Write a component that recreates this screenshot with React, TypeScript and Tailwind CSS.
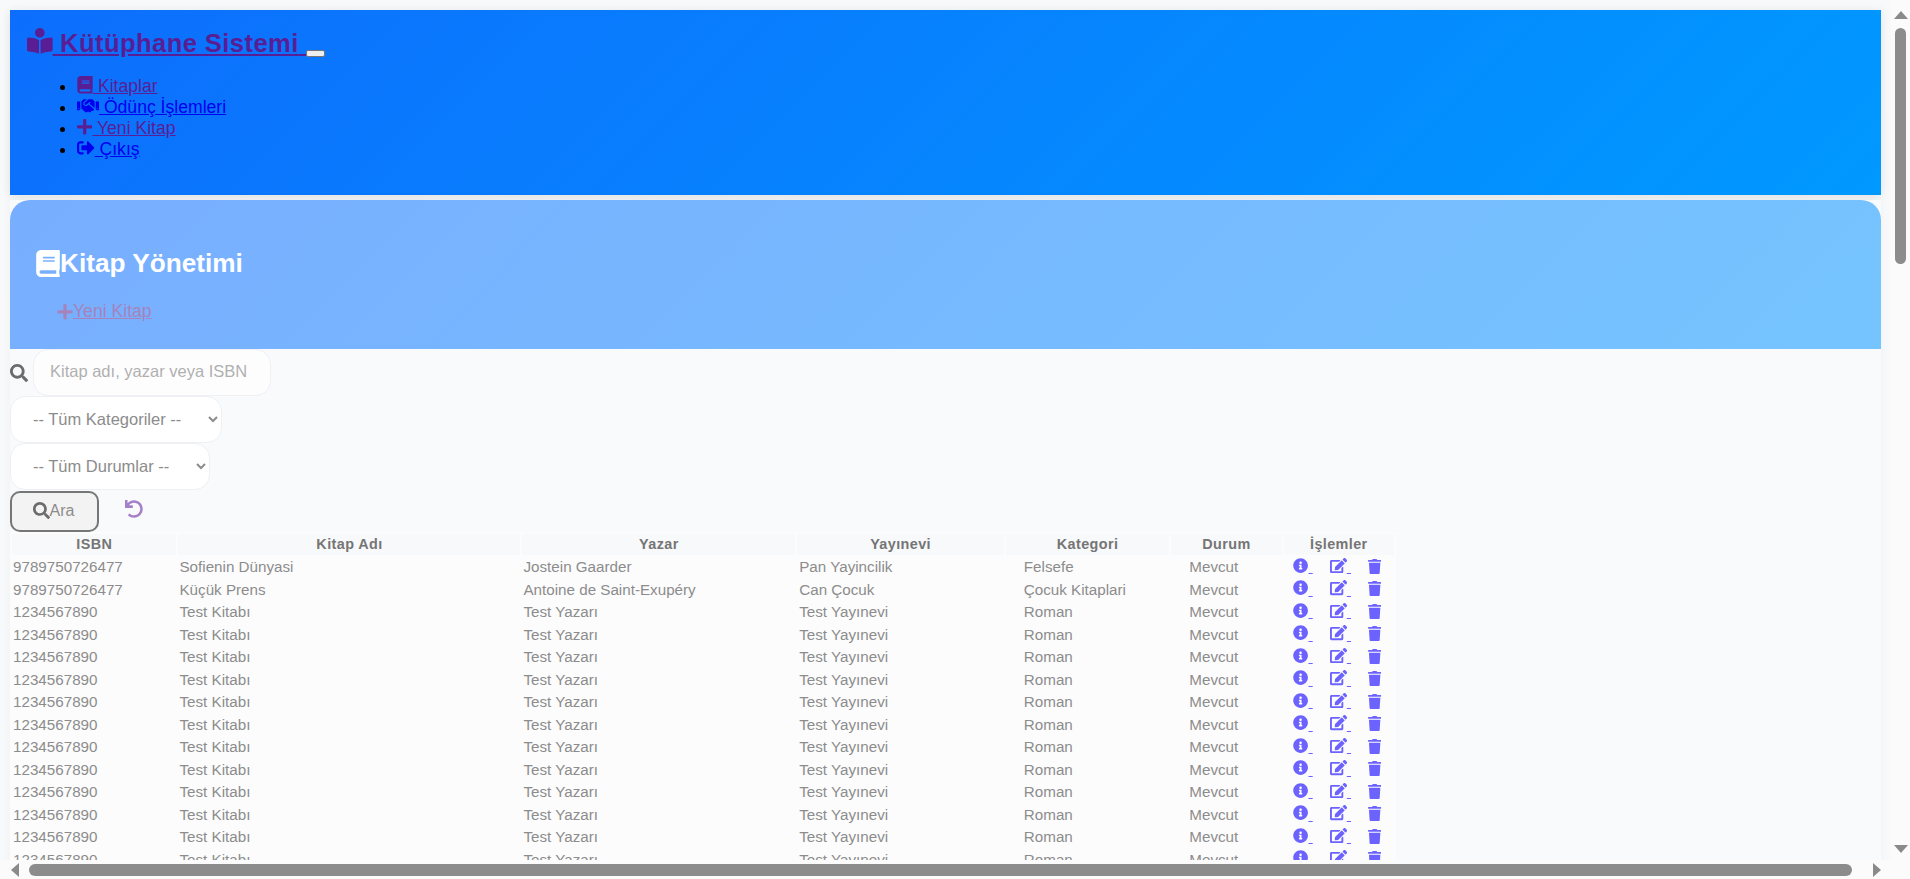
import { FaBook, FaBookReader, FaEdit, FaHandshake, FaInfoCircle, FaPlus, FaSearch, FaSignOutAlt, FaTrash, FaUndo } from "react-icons/fa";

const font = "font-['Liberation_Sans',Arial,sans-serif]";

const rows = [
  ["9789750726477", "Sofienin Dünyasi", "Jostein Gaarder", "Pan Yayincilik", "Felsefe"],
  ["9789750726477", "Küçük Prens", "Antoine de Saint-Exupéry", "Can Çocuk", "Çocuk Kitaplari"],
  ...Array.from({ length: 12 }, () => ["1234567890", "Test Kitabı", "Test Yazarı", "Test Yayınevi", "Roman"]),
];

const headers = ["ISBN", "Kitap Adı", "Yazar", "Yayınevi", "Kategori", "Durum", "İşlemler"];
const widths = [164, 341, 272, 206, 163, 110, 110];

function NavItem({ icon, label, visited }: { icon: React.ReactNode; label: string; visited?: boolean }) {
  return (
    <li className="list-disc">
      <a href="#" className={`underline ${visited ? "text-[#5a1e94]" : "text-[#0000ee]"}`}>
        <span className="inline-block align-[-2px]">{icon}</span> {label}
      </a>
    </li>
  );
}

function ActionLink({ icon }: { icon: React.ReactNode }) {
  return (
    <a href="#" className="whitespace-pre text-[#6c63ff] underline">
      <span className="inline-block align-[-1px]">{icon}</span>{" "}
    </a>
  );
}

export default function App() {
  return (
    <div className={`flex h-[879px] w-[1910px] flex-col overflow-hidden bg-[#fbfbfc] ${font}`}>
      <div className="flex h-[860px] min-h-0">
        <main className="h-[860px] w-[1891px] overflow-hidden bg-[#f8f9fb] pt-[10px] pl-[10px] pr-[10px]">
          <header className="h-[185px] bg-[linear-gradient(135deg,#0d6efd,#0099ff)] px-[17px] pt-[14px] shadow-[0_2px_10px_rgba(0,0,0,0.1)]">
            <h1 className="flex items-end text-[25.6px] leading-[38px] font-bold tracking-[0.4px] text-[#5a1e94]">
              <a href="#" className="underline whitespace-pre">
                <span className="inline-block align-[-2px]"><FaBookReader /></span> Kütüphane Sistemi{" "}
              </a>
              <button className="mb-[5px] h-[7px] w-[19px] rounded-[2px] border border-[#767676] bg-[#efefef]" />
            </h1>
            <ul className="mt-[14px] pl-[50px] text-[17.6px] leading-[21px]">
              <NavItem icon={<FaBook className="h-[17.6px] w-[16px]" />} label="Kitaplar" visited />
              <NavItem icon={<FaHandshake className="h-[17.6px] w-[22px]" />} label="Ödünç İşlemleri" />
              <NavItem icon={<FaPlus className="h-[17.6px] w-[15.4px]" />} label="Yeni Kitap" visited />
              <NavItem icon={<FaSignOutAlt className="h-[17.6px] w-[17.6px]" />} label="Çıkış" />
            </ul>
          </header>
          <div className="mt-[5px] h-[700px] bg-[#f9fafb] shadow-[0_0_10px_rgba(0,0,0,0.04)]">
            <section className="h-[149px] rounded-t-[20px] bg-[linear-gradient(135deg,#78aeff,#75c4ff)] pl-[26px] pt-[47px]">
              <h2 className="flex items-center text-[26.2px] leading-[32px] font-bold text-white">
                <FaBook className="h-[27px] w-[24px]" />
                Kitap Yönetimi
              </h2>
              <a href="#" className="mt-[22px] ml-[21px] flex w-fit items-center text-[17.6px] leading-[21px] text-[#a583bd] underline">
                <FaPlus className="h-[17.6px] w-[16px]" />
                Yeni Kitap
              </a>
            </section>
            <form className="flex flex-col items-start text-[#8c8c8c]">
              <div className="flex h-[47px] items-center">
                <FaSearch className="mr-[5px] text-[18px] text-[#6c6c6c]" />
                <input
                  placeholder="Kitap adı, yazar veya ISBN"
                  className="h-[47px] w-[238px] rounded-[15px] border border-[#eef0f4] bg-[#fdfdfe] px-[16px] pb-[2px] text-[16.5px] outline-none placeholder:text-[#b0b0b0]"
                />
              </div>
              <select className="h-[47px] w-[212px] rounded-[15px] border border-[#eef0f4] bg-white px-[18px] pb-[2px] text-[16.5px] text-[#8c8c8c] outline-none">
                <option>-- Tüm Kategoriler --</option>
              </select>
              <select className="h-[47px] w-[200px] rounded-[15px] border border-[#eef0f4] bg-white px-[18px] pb-[2px] text-[16.5px] text-[#8c8c8c] outline-none">
                <option>-- Tüm Durumlar --</option>
              </select>
              <div className="mt-[1px] flex h-[41px] items-center">
                <button type="button" className="flex h-[41px] w-[89px] items-center justify-center rounded-[10px] border-2 border-[#767676] bg-[#f3f3f3] pr-[2px] pb-[2px] text-[16px] text-[#8c8c8c]">
                  <FaSearch className="text-[17px] text-[#6c6c6c]" />
                  Ara
                </button>
                <FaUndo className="mb-[6px] ml-[26px] text-[18px] text-[#a580c9]" />
              </div>
            </form>
            <table className="w-[1386px] table-fixed border-separate border-spacing-[2px] bg-[#fcfcfd] text-[15.2px] leading-[18.4px] text-[#8c8c8c]">
              <colgroup>
                {widths.map((w, i) => (
                  <col key={i} width={w} />
                ))}
              </colgroup>
              <thead>
                <tr>
                  {headers.map((h) => (
                    <th key={h} className="h-[21px] bg-[#f8f9fb] p-0 text-center text-[14.4px] font-bold tracking-[0.4px] text-[#757575]">
                      {h}
                    </th>
                  ))}
                </tr>
              </thead>
              <tbody>
                {rows.map((r, i) => (
                  <tr key={i}>
                    {r.map((c, j) => (
                      <td key={j} className={`h-[20.5px] py-0 pr-0 whitespace-nowrap ${j === 4 ? "pl-[18px]" : j === 3 ? "pl-[2px]" : "pl-[1px]"}`}>
                        {c}
                      </td>
                    ))}
                    <td className="h-[20.5px] py-0 pr-0 pl-[18px] whitespace-nowrap">Mevcut</td>
                    <td className="h-[20.5px] p-0 whitespace-nowrap">
                      <div className="flex h-[20px] items-center justify-center gap-[17px] pr-[3px]">
                        <ActionLink icon={<FaInfoCircle className="h-[15.2px] w-[15.2px]" />} />
                        <ActionLink icon={<FaEdit className="h-[15.2px] w-[17.1px]" />} />
                        <FaTrash className="mb-[2px] h-[15.2px] w-[13.3px] text-[#6c63ff]" />
                      </div>
                    </td>
                  </tr>
                ))}
              </tbody>
            </table>
          </div>
        </main>
        <aside className="flex h-[860px] w-[19px] flex-col items-center bg-[#fbfbfc] pt-[10px]">
          <svg width="14" height="9" viewBox="0 0 14 9" className="fill-[#8a8a8a]"><path d="M0 9 7 1l7 8z" /></svg>
          <div className="mt-[9px] h-[236px] w-[11px] rounded-[6px] bg-[#8c8c8c]" />
          <svg width="14" height="9" viewBox="0 0 14 9" className="mt-auto mb-[6px] fill-[#8a8a8a]"><path d="M0 0h14L7 8z" /></svg>
        </aside>
      </div>
      <div className="flex h-[19px] items-center bg-[#fbfbfc] pl-[11px]">
        <svg width="8" height="14" viewBox="0 0 8 14" className="fill-[#8a8a8a]"><path d="M8 0v14L0 7z" /></svg>
        <div className="ml-[10px] h-[12px] w-[1823px] rounded-[6px] bg-[#8c8c8c]" />
        <svg width="8" height="14" viewBox="0 0 8 14" className="ml-[21px] fill-[#8a8a8a]"><path d="M0 0v14l8-7z" /></svg>
      </div>
    </div>
  );
}
